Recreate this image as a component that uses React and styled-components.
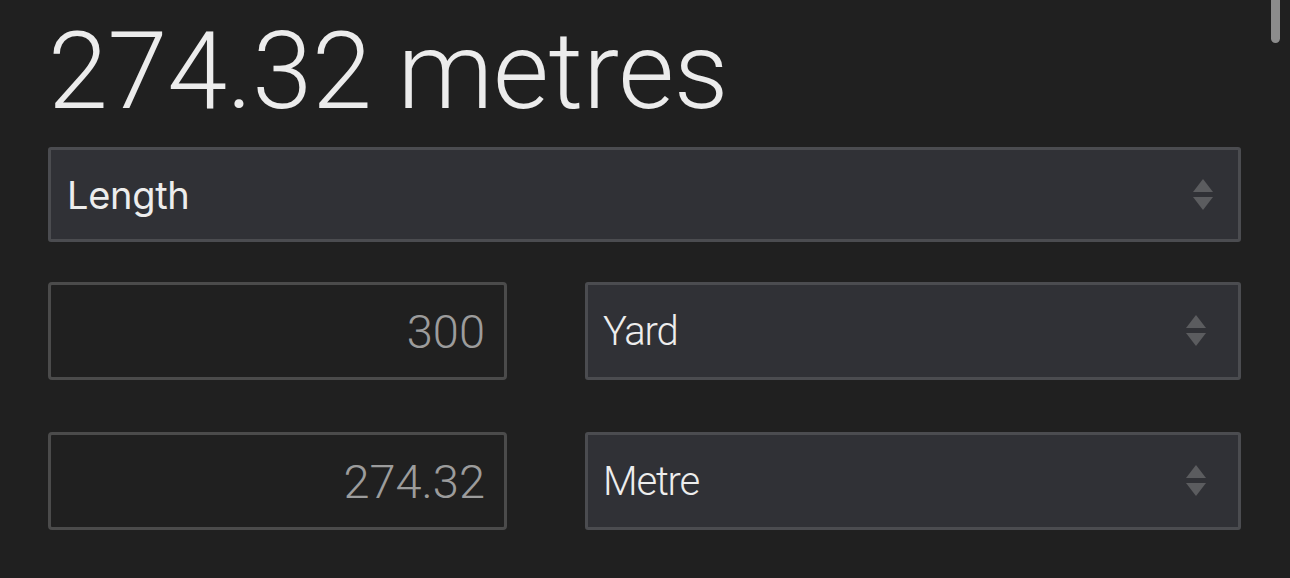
import React from 'react'
import styled, { createGlobalStyle } from 'styled-components'

const Global = createGlobalStyle`
html, body {
  margin: 0;
  padding: 0;
  background: #202020;
  height: 100%;
  overflow: hidden;
}
body {
  font-family: Roboto, 'Liberation Sans', Arial, sans-serif;
}
`

const Page = styled.div`
position: relative;
width: 1290px;
height: 578px;
background: #202020;
padding: 9px 49px 0 48px;
box-sizing: border-box;
`

const Result = styled.h1`
margin: 0;
font-family: Roboto, 'Liberation Sans', sans-serif;
font-weight: 300;
font-size: 108px;
line-height: 124px;
color: #ececec;
letter-spacing: -0.3px;
`

const Row = styled.div`
display: grid;
grid-template-columns: ${p => (p.$single ? '1fr' : '459px 1fr')};
column-gap: 78px;
margin-top: ${p => p.$top}px;
`

const SelectWrap = styled.div`
position: relative;
height: ${p => p.$h}px;
box-sizing: border-box;
border: 3px solid #4b4c50;
border-radius: 3px;
background: #303136;
display: flex;
align-items: center;
padding-left: ${p => p.$pad}px;
color: #ededed;
font-family: ${p => (p.$inter ? "Inter, 'Liberation Sans', sans-serif" : "Roboto, 'Liberation Sans', sans-serif")};
font-weight: ${p => (p.$inter ? 400 : 300)};
font-size: ${p => (p.$inter ? 38 : 40)}px;
letter-spacing: ${p => (p.$inter ? '-0.3px' : '-1.2px')};
`

const Arrows = styled.svg`
position: absolute;
right: ${p => p.$right}px;
top: 50%;
transform: translateY(-50%);
`

const NumberBox = styled.div`
height: 98px;
box-sizing: border-box;
border: 3px solid #4b4b4b;
border-radius: 4px;
background: #202020;
display: flex;
align-items: center;
justify-content: flex-end;
padding-right: 19px;
color: #9c9c9c;
font-weight: 300;
font-size: 47px;
`

const Thumb = styled.div`
position: absolute;
top: -8px;
right: 10px;
width: 9px;
height: 51px;
border-radius: 5px;
background: #8c8c8c;
`

const Updown = ({ right }) => (
  <Arrows $right={right} width="22" height="36" viewBox="0 0 22 36">
    <polygon points="11,2 21,15 1,15" fill="#5b5c5f" />
    <polygon points="1,20 21,20 11,33" fill="#5b5c5f" />
  </Arrows>
)

const Select = ({ label, h, pad, right, inter }) => (
  <SelectWrap $h={h} $pad={pad} $inter={inter}>
    {label}
    <Updown right={right} />
  </SelectWrap>
)

export default function App() {
  return (
    <Page>
      <Global />
      <Thumb />
      <Result>274.32 metres</Result>
      <Row $top={14} $single>
        <Select label="Length" h={95} pad={16} right={24} inter />
      </Row>
      <Row $top={40}>
        <NumberBox>300</NumberBox>
        <Select label="Yard" h={98} pad={15} right={31} />
      </Row>
      <Row $top={52}>
        <NumberBox>274.32</NumberBox>
        <Select label="Metre" h={98} pad={15} right={31} />
      </Row>
    </Page>
  )
}
